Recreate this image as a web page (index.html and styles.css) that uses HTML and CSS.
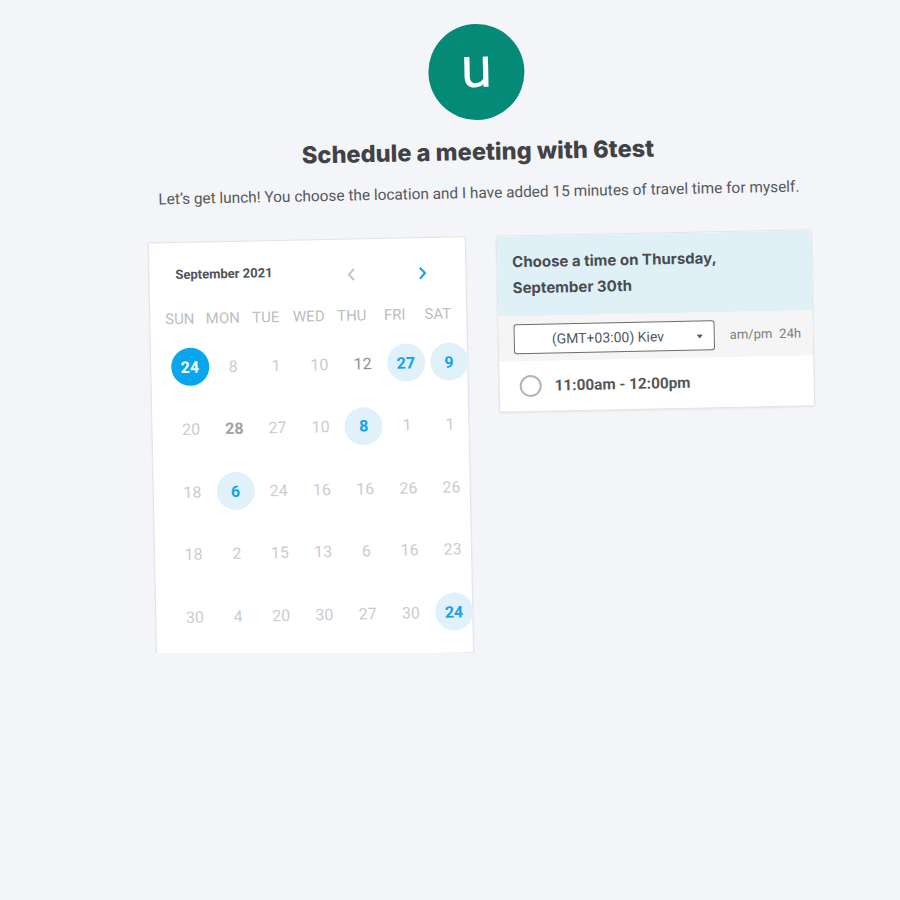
FILE: index.html
```html
<!DOCTYPE html>
<html>
<head>
<meta charset="utf-8">
<link rel="stylesheet" href="styles.css">
</head>
<body>
<div class="page">
  <div class="avatar">u</div>
  <h1 class="title">Schedule a meeting with 6test</h1>
  <p class="subtitle">Let’s get lunch! You choose the location and I have added 15 minutes of travel time for myself.</p>
  <div class="cards">
    <div class="calendar">
      <div class="cal-head">
        <span class="month">September 2021</span>
        <span class="nav prev"><svg width="10" height="14" viewBox="0 0 10 14"><path d="M7.5 1.5 L2.5 7 L7.5 12.5" fill="none" stroke="#c4c4c4" stroke-width="2"/></svg></span>
        <span class="nav next"><svg width="10" height="14" viewBox="0 0 10 14"><path d="M2.5 1.5 L7.5 7 L2.5 12.5" fill="none" stroke="#1ea2e4" stroke-width="2.2"/></svg></span>
      </div>
      <div class="weekdays">
        <span>SUN</span><span>MON</span><span>TUE</span><span>WED</span><span>THU</span><span>FRI</span><span>SAT</span>
      </div>
      <div class="days">
        <div class="cell"><span class="d sel">24</span></div>
        <div class="cell"><span class="d">8</span></div>
        <div class="cell"><span class="d">1</span></div>
        <div class="cell"><span class="d">10</span></div>
        <div class="cell"><span class="d dark">12</span></div>
        <div class="cell"><span class="d avail">27</span></div>
        <div class="cell"><span class="d avail">9</span></div>

        <div class="cell"><span class="d">20</span></div>
        <div class="cell"><span class="d dark bold">28</span></div>
        <div class="cell"><span class="d">27</span></div>
        <div class="cell"><span class="d">10</span></div>
        <div class="cell"><span class="d avail">8</span></div>
        <div class="cell"><span class="d">1</span></div>
        <div class="cell"><span class="d">1</span></div>

        <div class="cell"><span class="d">18</span></div>
        <div class="cell"><span class="d avail">6</span></div>
        <div class="cell"><span class="d">24</span></div>
        <div class="cell"><span class="d">16</span></div>
        <div class="cell"><span class="d">16</span></div>
        <div class="cell"><span class="d">26</span></div>
        <div class="cell"><span class="d">26</span></div>

        <div class="cell"><span class="d">18</span></div>
        <div class="cell"><span class="d">2</span></div>
        <div class="cell"><span class="d">15</span></div>
        <div class="cell"><span class="d">13</span></div>
        <div class="cell"><span class="d">6</span></div>
        <div class="cell"><span class="d">16</span></div>
        <div class="cell"><span class="d">23</span></div>

        <div class="cell"><span class="d">30</span></div>
        <div class="cell"><span class="d">4</span></div>
        <div class="cell"><span class="d">20</span></div>
        <div class="cell"><span class="d">30</span></div>
        <div class="cell"><span class="d">27</span></div>
        <div class="cell"><span class="d">30</span></div>
        <div class="cell"><span class="d avail">24</span></div>
      </div>
    </div>

    <div class="times">
      <div class="times-head">Choose a time on Thursday,<br>September 30th</div>
      <div class="times-bar">
        <div class="tz-select">
          <span class="tz-text">(GMT+03:00) Kiev</span>
          <span class="tz-arrow"></span>
        </div>
        <div class="fmt"><span>am/pm</span><span>24h</span></div>
      </div>
      <div class="slot">
        <span class="radio"></span>
        <span class="slot-text">11:00am - 12:00pm</span>
      </div>
    </div>
  </div>
</div>
</body>
</html>
```

FILE: styles.css
```css
* { box-sizing: border-box; }

body {
  margin: 0;
  background: #f4f5f9;
  font-family: Roboto, "Liberation Sans", sans-serif;
}

.page {
  width: 664px;
  margin-left: 151px;
  padding-top: 24px;
  display: flex;
  flex-direction: column;
  align-items: center;
  transform: rotate(-1.15deg);
  transform-origin: 329px 400px;
}

.avatar {
  width: 96px;
  height: 96px;
  border-radius: 50%;
  background: #068a78;
  color: #fff;
  font-family: Roboto, sans-serif;
  font-weight: 400;
  font-size: 57px;
  line-height: 88px;
  text-align: center;
}

.title {
  margin: 16px 0 0;
  height: 32px;
  line-height: 32px;
  font-family: Inter, "Liberation Sans", sans-serif;
  font-weight: 800;
  font-size: 23.6px;
  color: #404245;
}

.subtitle {
  margin: 15px 0 0;
  line-height: 20px;
  font-size: 15.4px;
  color: #55585c;
  white-space: nowrap;
}

.cards {
  width: 100%;
  margin-top: 33px;
  display: flex;
  gap: 30px;
  align-items: flex-start;
}

.calendar {
  width: 318px;
  height: 417px;
  background: #fff;
  border: 1px solid #e3e4e7;
  border-radius: 2px;
  box-shadow: 0 1px 2px rgba(0,0,0,0.06);
}

.cal-head {
  height: 63px;
  padding-left: 26px;
  display: flex;
  align-items: center;
}

.month {
  width: 165px;
  font-size: 13px;
  font-weight: 700;
  color: #505256;
}

.nav {
  width: 21px;
  height: 14px;
  margin-top: 7px;
  display: flex;
  justify-content: center;
}

.nav.next { margin-left: 50px; }

.weekdays {
  height: 27px;
  padding-left: 8px;
  display: grid;
  grid-template-columns: repeat(7, 43px);
  line-height: 27px;
  text-align: center;
  font-size: 15px;
  color: #bcbdc0;
}

.days {
  margin-top: 3px;
  padding-left: 17px;
  display: grid;
  grid-template-columns: repeat(7, 43.2px);
  grid-auto-rows: 62.5px;
}

.cell {
  display: flex;
  align-items: center;
  justify-content: center;
}

.d {
  width: 38px;
  height: 38px;
  border-radius: 50%;
  display: flex;
  align-items: center;
  justify-content: center;
  font-size: 16px;
  color: #cbcccf;
  flex-shrink: 0;
}

.d.dark { color: #8d8f93; }
.d.bold { font-weight: 700; color: #a0a2a5; }

.d.sel {
  background: #08a6ee;
  color: #fff;
  font-weight: 700;
}

.d.avail {
  background: #e1f1f9;
  color: #17a2e6;
  font-weight: 700;
}

.times {
  width: 316px;
  background: #fff;
  border: 1px solid #e3e4e7;
  border-radius: 2px;
  box-shadow: 0 1px 2px rgba(0,0,0,0.06);
  overflow: hidden;
}

.times-head {
  height: 80px;
  padding: 13px 0 0 15px;
  background: #dff0f7;
  font-family: Inter, Roboto, sans-serif;
  font-size: 15px;
  font-weight: 700;
  line-height: 26px;
  color: #4a4c50;
}

.times-bar {
  height: 45px;
  background: #f5f5f6;
  display: flex;
  align-items: center;
  padding-left: 15px;
}

.tz-select {
  position: relative;
  width: 201px;
  height: 30px;
  margin-top: 1px;
  background: #fff;
  border: 1px solid #6b6d70;
  border-radius: 3px;
  padding-left: 37px;
  display: flex;
  align-items: center;
  font-size: 14px;
  color: #55585c;
}

.tz-arrow {
  position: absolute;
  right: 11px;
  top: 13px;
  width: 0;
  height: 0;
  border-left: 3.5px solid transparent;
  border-right: 3.5px solid transparent;
  border-top: 4px solid #555;
}

.fmt {
  margin-left: 15px;
  display: flex;
  gap: 7px;
  font-size: 13px;
  color: #7a7c80;
}

.slot {
  height: 50px;
  display: flex;
  align-items: center;
  padding-left: 20px;
}

.radio {
  width: 22px;
  height: 22px;
  border: 2px solid #b3b4b7;
  border-radius: 50%;
  background: #fff;
}

.slot-text {
  margin-left: 13px;
  font-size: 15.3px;
  font-weight: 700;
  color: #55575b;
}
```
